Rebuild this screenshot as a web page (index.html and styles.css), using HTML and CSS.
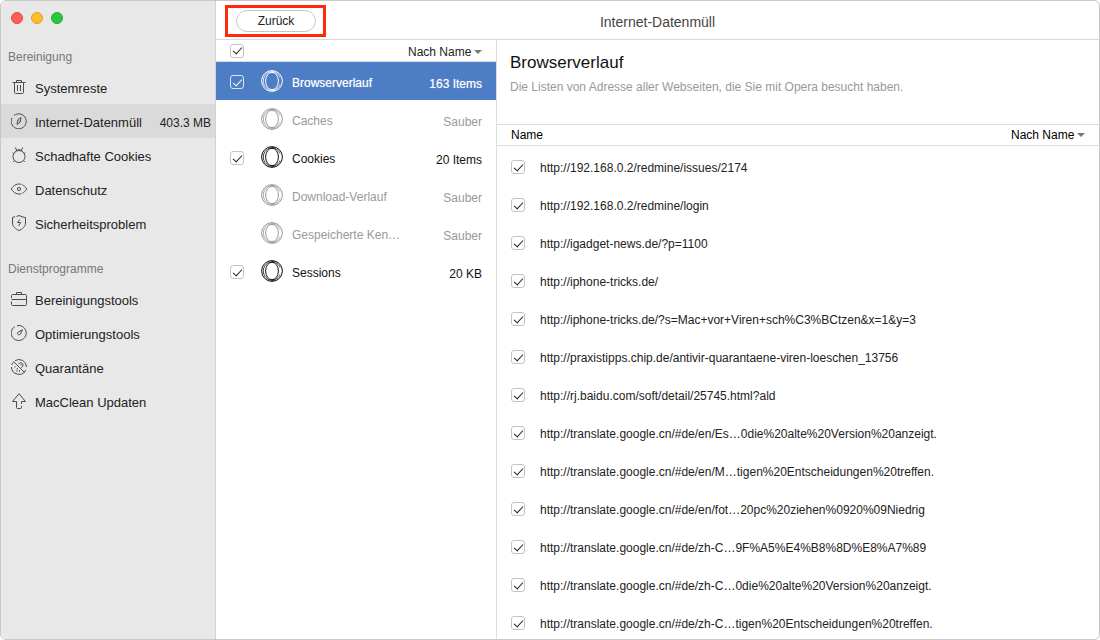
FILE: index.html
```html
<!DOCTYPE html>
<html lang="de">
<head>
<meta charset="utf-8">
<title>Internet-Datenmüll</title>
<link rel="stylesheet" href="styles.css">
</head>
<body>
<svg class="defs" aria-hidden="true">
  <symbol id="opera" viewBox="0 0 22 22">
    <circle cx="11" cy="11" r="10.4"/>
    <ellipse cx="11" cy="11" rx="6.400" ry="8.700"/>
    <path stroke-width=".8" d="M13.500 1.500C7 1 2.300 5.500 2.300 11S7 21 13.500 20.500M11 2.300C15 2 18 4.500 19 7.500M11 19.700C15 20 18 17.500 19 14.500"/>
  </symbol>
</svg>
<div class="window">
  <aside class="sidebar">
    <div class="lights">
      <button class="light red" aria-label="Schließen"></button>
      <button class="light yellow" aria-label="Minimieren"></button>
      <button class="light green" aria-label="Zoomen"></button>
    </div>
    <nav class="group">
      <h2 class="group-title">Bereinigung</h2>
      <a class="nav-item" href="#system"><svg class="nav-icon" viewBox="0 0 16 16"><path d="M1.500 3.500h13M5.500 3.500v-2h5v2M3.500 4v9.500c0 .6.400 1 1 1h7c.6 0 1-.4 1-1V4M6.500 6v6M9.500 6v6"/></svg>Systemreste</a>
      <a class="nav-item active" href="#internet"><svg class="nav-icon" viewBox="0 0 16 16"><path d="M3 2.500A7.500 7.500 0 1 1 1 5M10 4.500L9.200 9.100 6 11.500l.8-4.600zM7.700 8.200h.8"/></svg>Internet-Datenmüll<span class="size">403.3 MB</span></a>
      <a class="nav-item" href="#cookies"><svg class="nav-icon" viewBox="0 0 16 16"><circle cx="8" cy="9.500" r="6"/><path d="M4.500 4.500C5.500 2.300 10.500 2.300 11.500 4.500M5.500 3L4.300.5M10.500 3L11.700.5M3.200 7L1.800 5.500M12.800 7l1.400-1.500M3.500 13.500l-1.300 1.500M12.500 13.500l1.300 1.500"/></svg>Schadhafte Cookies</a>
      <a class="nav-item" href="#privacy"><svg class="nav-icon" viewBox="0 0 16 16"><path d="M.3 8C4.300 1.300 11.700 1.300 15.700 8 11.700 14.700 4.300 14.700.3 8z" stroke-dasharray="12 1"/><circle cx="8" cy="8" r="1.600"/></svg>Datenschutz</a>
      <a class="nav-item" href="#security"><svg class="nav-icon" viewBox="0 0 16 16"><path d="M4 1.700L1.500 2.500V8c0 3.500 3 6 6.500 7.500C11.500 14 14.500 11.500 14.500 8V2.500C12 2.300 10 1.500 8 .5L5.500 1.500M8.800 4.500L6.500 7.500h3.200L7.500 11"/></svg>Sicherheitsproblem</a>
    </nav>
    <nav class="group">
      <h2 class="group-title">Dienstprogramme</h2>
      <a class="nav-item" href="#clean"><svg class="nav-icon" viewBox="0 0 16 16"><path d="M.5 7V4.500c0-.6.400-1 1-1h13c.6 0 1 .4 1 1v4h-15M5.500 3.500v-2h5v2M.5 10.500v3c0 .6.400 1 1 1h13c.6 0 1-.4 1-1V8.500"/></svg>Bereinigungstools</a>
      <a class="nav-item" href="#optimize"><svg class="nav-icon" viewBox="0 0 16 16"><path d="M3.800 1.600A7.500 7.500 0 1 0 8 .5L6 .8M11.500 4.800L9.300 9.200C8 10.800 5.500 9 6.900 7.300z"/></svg>Optimierungstools</a>
      <a class="nav-item" href="#quarantine"><svg class="nav-icon" viewBox="0 0 16 16"><path d="M4 1.700A7.500 7.500 0 0 1 15.500 8M14.800 11A7.500 7.500 0 0 1 .5 8M.8 6A7.500 7.500 0 0 1 2.500 3M2.700 2.700l11 11M7.500 4.700c3-2 4.700-.2 4.500 1.500s-1.500 2-2 3M4 7.300v1.200M6.300 9v1.500M5 12h1.500M8.500 11v1.700M9.500 5.800h1.300"/></svg>Quarantäne</a>
      <a class="nav-item" href="#update"><svg class="nav-icon" viewBox="0 0 16 16"><path d="M10.500 11V8.500h4L8 .7 1.500 8.500h4v6c0 .6.400 1 1 1h3c.6 0 1-.4 1-1V13"/></svg>MacClean Updaten</a>
    </nav>
  </aside>

  <main class="main">
    <header class="toolbar">
      <div class="highlight"><button class="back">Zurück</button></div>
      <h1 class="title">Internet-Datenmüll</h1>
    </header>
    <div class="panes">
      <section class="categories">
        <div class="list-head">
          <input class="check" type="checkbox" checked aria-label="Alle auswählen">
          <label class="sort"><select aria-label="Sortierung"><option>Nach Name</option></select></label>
        </div>
        <ul class="list">
          <li class="row selected"><input class="check" id="c1" type="checkbox" checked><svg class="opera"><use href="#opera"/></svg><label class="name" for="c1">Browserverlauf</label><span class="value">163 Items</span></li>
          <li class="row clean"><svg class="opera"><use href="#opera"/></svg><span class="name">Caches</span><span class="value">Sauber</span></li>
          <li class="row"><input class="check" id="c3" type="checkbox" checked><svg class="opera"><use href="#opera"/></svg><label class="name" for="c3">Cookies</label><span class="value">20 Items</span></li>
          <li class="row clean"><svg class="opera"><use href="#opera"/></svg><span class="name">Download-Verlauf</span><span class="value">Sauber</span></li>
          <li class="row clean"><svg class="opera"><use href="#opera"/></svg><span class="name">Gespeicherte Ken…</span><span class="value">Sauber</span></li>
          <li class="row"><input class="check" id="c6" type="checkbox" checked><svg class="opera"><use href="#opera"/></svg><label class="name" for="c6">Sessions</label><span class="value">20 KB</span></li>
        </ul>
      </section>
      <section class="details">
        <div class="intro">
          <h2 class="heading">Browserverlauf</h2>
          <p class="description">Die Listen von Adresse aller Webseiten, die Sie mit Opera besucht haben.</p>
        </div>
        <table class="urls">
          <thead><tr><th colspan="2"><div class="table-head">Name<label class="sort"><select aria-label="Sortierung"><option>Nach Name</option></select></label></div></th></tr></thead>
          <tbody>
            <tr><td class="tick"><input class="check" id="u1" type="checkbox" checked></td><td><label for="u1">http://192.168.0.2/redmine/issues/2174</label></td></tr>
            <tr><td class="tick"><input class="check" id="u2" type="checkbox" checked></td><td><label for="u2">http://192.168.0.2/redmine/login</label></td></tr>
            <tr><td class="tick"><input class="check" id="u3" type="checkbox" checked></td><td><label for="u3">http://igadget-news.de/?p=1100</label></td></tr>
            <tr><td class="tick"><input class="check" id="u4" type="checkbox" checked></td><td><label for="u4">http://iphone-tricks.de/</label></td></tr>
            <tr><td class="tick"><input class="check" id="u5" type="checkbox" checked></td><td><label for="u5">http://iphone-tricks.de/?s=Mac+vor+Viren+sch%C3%BCtzen&amp;x=1&amp;y=3</label></td></tr>
            <tr><td class="tick"><input class="check" id="u6" type="checkbox" checked></td><td><label for="u6">http://praxistipps.chip.de/antivir-quarantaene-viren-loeschen_13756</label></td></tr>
            <tr><td class="tick"><input class="check" id="u7" type="checkbox" checked></td><td><label for="u7">http://rj.baidu.com/soft/detail/25745.html?ald</label></td></tr>
            <tr><td class="tick"><input class="check" id="u8" type="checkbox" checked></td><td><label for="u8">http://translate.google.cn/#de/en/Es…0die%20alte%20Version%20anzeigt.</label></td></tr>
            <tr><td class="tick"><input class="check" id="u9" type="checkbox" checked></td><td><label for="u9">http://translate.google.cn/#de/en/M…tigen%20Entscheidungen%20treffen.</label></td></tr>
            <tr><td class="tick"><input class="check" id="u10" type="checkbox" checked></td><td><label for="u10">http://translate.google.cn/#de/en/fot…20pc%20ziehen%0920%09Niedrig</label></td></tr>
            <tr><td class="tick"><input class="check" id="u11" type="checkbox" checked></td><td><label for="u11">http://translate.google.cn/#de/zh-C…9F%A5%E4%B8%8D%E8%A7%89</label></td></tr>
            <tr><td class="tick"><input class="check" id="u12" type="checkbox" checked></td><td><label for="u12">http://translate.google.cn/#de/zh-C…0die%20alte%20Version%20anzeigt.</label></td></tr>
            <tr><td class="tick"><input class="check" id="u13" type="checkbox" checked></td><td><label for="u13">http://translate.google.cn/#de/zh-C…tigen%20Entscheidungen%20treffen.</label></td></tr>
          </tbody>
        </table>
      </section>
    </div>
  </main>
</div>
</body>
</html>
```
FILE: styles.css
```css
* { box-sizing: border-box; }

body {
  margin: 0;
  background: #fff;
  color: #222;
  font: 12px/16px "Liberation Sans", Arial, sans-serif;
}

button, select, input { font: inherit; color: inherit; margin: 0; }
h1, h2, p, ul { margin: 0; padding: 0; font-weight: normal; list-style: none; }
.defs { display: none; }

.window {
  display: flex;
  height: 100vh;
  border: 1px solid #c8c8c8;
  border-radius: 6px;
  overflow: hidden;
}

/* Sidebar */
.sidebar {
  flex: 0 0 215px;
  background: #e8e8e8;
  border-right: 1px solid #d2d2d2;
  font-size: 13px;
}
.lights { display: flex; gap: 8px; padding: 11px 10px 0; }
.light { width: 12px; height: 12px; padding: 0; border: 1px solid; border-radius: 50%; }
.red { background: #ff5f57; border-color: #e2463f; }
.yellow { background: #ffbd2e; border-color: #dfa023; }
.green { background: #28c940; border-color: #1dad2b; }

.group { padding-top: 25px; }
.group + .group { padding-top: 21px; }
.group-title { padding: 0 7px 5px; font-size: 12px; color: #777; }
.nav-item {
  display: flex;
  align-items: center;
  gap: 8px;
  height: 34px;
  padding: 3px 4px 0 10px;
  color: #222;
  text-decoration: none;
  white-space: nowrap;
}
.nav-item.active { background: #dadada; }
.nav-icon { flex: none; width: 16px; height: 16px; margin-bottom: 3px; fill: none; stroke: #4c4c4c; }
.size { margin-left: auto; font-size: 12px; }

/* Toolbar */
.main { flex: 1; min-width: 0; display: flex; flex-direction: column; }
.toolbar {
  display: grid;
  grid-template-columns: 1fr auto 1fr;
  align-items: center;
  height: 39px;
  padding: 2px 9px 0;
  border-bottom: 1px solid #d8d8d8;
}
.highlight { justify-self: start; padding: 2px 7px 2px 8px; border: 3px solid #ff2a0c; }
.back {
  display: block;
  width: 80px;
  height: 22px;
  padding: 0;
  border: 1px solid #c6c6c6;
  border-radius: 11px;
  background: #fff;
}
.title { padding-top: 2px; font-size: 14px; color: #444; }

.panes { flex: 1; min-height: 0; display: flex; }

/* Shared controls */
.check {
  appearance: none;
  flex: none;
  display: grid;
  place-items: center;
  width: 14px;
  height: 14px;
  border: 1px solid #c4c4c4;
  border-radius: 3px;
  color: #222;
}
.check:checked::before {
  content: "";
  width: 8px;
  height: 4px;
  margin-bottom: 2px;
  border: solid;
  border-width: 0 0 1px 1px;
  transform: rotate(-48deg);
}
.sort { display: flex; align-items: center; gap: 2px; margin-left: auto; font-weight: normal; }
.sort select { appearance: none; padding: 0; border: 0; background: none; }
.sort::after {
  content: "";
  border: solid transparent;
  border-width: 4px 4px 0;
  border-top-color: #777;
}

/* Category list */
.categories { flex: 0 0 281px; border-right: 1px solid #dedede; }
.list-head {
  display: flex;
  align-items: center;
  height: 22px;
  padding: 0 14px;
  border-bottom: 1px solid #dedede;
}
.list-head .sort { padding-top: 2px; }
.row {
  display: grid;
  grid-template-columns: 31px 22px 1fr auto;
  align-items: center;
  height: 38px;
  padding: 0 14px;
  color: #111;
}
.row > .check { margin-top: 2px; }
.row > .opera { grid-column: 2; }
.opera { width: 22px; height: 22px; fill: none; stroke: currentColor; }
.row .name { padding: 3px 0 0 9px; }
.row .value { padding-top: 5px; }
.row.clean { color: #999; }
.row.selected {
  background: #4d7dc4;
  color: #fff;
  text-shadow: 0 0 1px rgba(255, 255, 255, 0.6);
}
.selected .check { color: #fff; border-color: #dbe5f3; }

/* Details */
.details { flex: 1; min-width: 0; overflow: hidden auto; scrollbar-width: none; }
.intro { height: 84px; padding: 11px 13px; }
.heading { font-size: 17px; line-height: 24px; color: #111; }
.description { padding-top: 4px; color: #999; }
.urls { width: 100%; border-collapse: separate; border-spacing: 0; }
.urls th { padding: 0; font-weight: normal; text-align: left; color: #000; }
.table-head {
  display: flex;
  align-items: center;
  height: 22px;
  margin-bottom: 2px;
  padding: 0 14px;
  border: solid #dedede;
  border-width: 1px 0;
}
.urls td { height: 38px; padding: 2px 0 0; white-space: nowrap; }
.urls .tick { width: 43px; padding: 0 0 0 14px; }
```
